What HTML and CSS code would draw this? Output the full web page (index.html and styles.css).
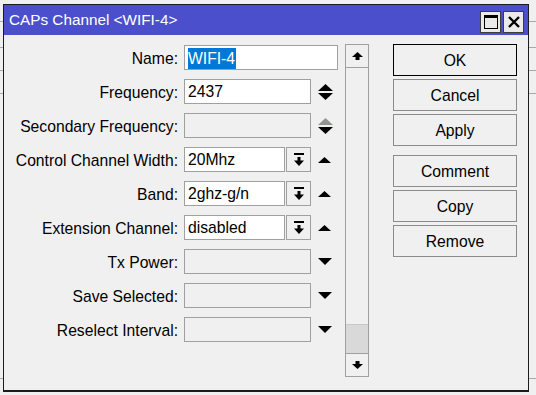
FILE: index.html
```html
<!DOCTYPE html>
<html lang="en">
<head>
  <meta charset="UTF-8">
  <title>CAPs Channel</title>
  <link rel="stylesheet" href="styles.css">
</head>
<body>
  <div class="desk">
    <div class="desk-row r1"></div>
    <div class="desk-row r2"></div>
    <div class="desk-row r3"></div>
    <div class="desk-row r4"></div>
    <div class="desk-row r5"></div>
  </div>

  <div class="window">
    <div class="titlebar">
      <span class="title">CAPs Channel &lt;WIFI-4&gt;</span>
      <div class="title-buttons">
        <button class="tbtn">
          <svg width="14" height="14" viewBox="0 0 14 14"><rect x="0.5" y="0.5" width="13" height="13" fill="none" stroke="#000"/><rect x="0" y="0" width="14" height="3" fill="#000"/></svg>
        </button>
        <button class="tbtn">
          <svg width="12" height="12" viewBox="0 0 12 12"><path d="M1 1 L11 11 M11 1 L1 11" stroke="#000" stroke-width="2.4"/></svg>
        </button>
      </div>
    </div>

    <div class="content">
      <div class="form">
        <label class="label">Name:</label>
        <div class="field wide"><span class="selected">WIFI-4</span></div>

        <label class="label">Frequency:</label>
        <div class="field">2437</div>
        <div class="side">
          <svg width="15" height="16" viewBox="0 0 15 16"><polygon points="0,7 7.5,0 15,7" fill="#000"/><polygon points="0,9 15,9 7.5,16" fill="#000"/></svg>
        </div>

        <label class="label">Secondary Frequency:</label>
        <div class="field disabled"></div>
        <div class="side">
          <svg width="15" height="16" viewBox="0 0 15 16"><polygon points="0,7 7.5,0 15,7" fill="#8e968e"/><polygon points="0,9 15,9 7.5,16" fill="#000"/></svg>
        </div>

        <label class="label">Control Channel Width:</label>
        <div class="combo">
          <div class="field">20Mhz</div>
          <div class="drop">
            <svg width="10" height="14" viewBox="0 0 10 14"><rect x="0" y="0" width="10" height="2" fill="#000"/><rect x="3.5" y="4" width="3" height="4" fill="#000"/><polygon points="0,7.5 10,7.5 5,13" fill="#000"/></svg>
          </div>
        </div>
        <div class="side">
          <svg width="13" height="6" viewBox="0 0 13 6"><polygon points="0,6 6.5,0 13,6" fill="#000"/></svg>
        </div>

        <label class="label">Band:</label>
        <div class="combo">
          <div class="field">2ghz-g/n</div>
          <div class="drop">
            <svg width="10" height="14" viewBox="0 0 10 14"><rect x="0" y="0" width="10" height="2" fill="#000"/><rect x="3.5" y="4" width="3" height="4" fill="#000"/><polygon points="0,7.5 10,7.5 5,13" fill="#000"/></svg>
          </div>
        </div>
        <div class="side">
          <svg width="13" height="6" viewBox="0 0 13 6"><polygon points="0,6 6.5,0 13,6" fill="#000"/></svg>
        </div>

        <label class="label">Extension Channel:</label>
        <div class="combo">
          <div class="field">disabled</div>
          <div class="drop">
            <svg width="10" height="14" viewBox="0 0 10 14"><rect x="0" y="0" width="10" height="2" fill="#000"/><rect x="3.5" y="4" width="3" height="4" fill="#000"/><polygon points="0,7.5 10,7.5 5,13" fill="#000"/></svg>
          </div>
        </div>
        <div class="side">
          <svg width="13" height="6" viewBox="0 0 13 6"><polygon points="0,6 6.5,0 13,6" fill="#000"/></svg>
        </div>

        <label class="label">Tx Power:</label>
        <div class="field disabled"></div>
        <div class="side">
          <svg width="14" height="7" viewBox="0 0 14 7"><polygon points="0,0 14,0 7,7" fill="#000"/></svg>
        </div>

        <label class="label">Save Selected:</label>
        <div class="field disabled"></div>
        <div class="side">
          <svg width="14" height="7" viewBox="0 0 14 7"><polygon points="0,0 14,0 7,7" fill="#000"/></svg>
        </div>

        <label class="label">Reselect Interval:</label>
        <div class="field disabled"></div>
        <div class="side">
          <svg width="14" height="7" viewBox="0 0 14 7"><polygon points="0,0 14,0 7,7" fill="#000"/></svg>
        </div>
      </div>

      <div class="scrollbar">
        <div class="sb-btn">
          <svg width="11" height="8" viewBox="0 0 11 8"><polygon points="0,5 5.5,0 11,5" fill="#000"/><rect x="3.5" y="5" width="4" height="3" fill="#000"/></svg>
        </div>
        <div class="sb-track"></div>
        <div class="sb-thumb"></div>
        <div class="sb-btn down">
          <svg width="11" height="8" viewBox="0 0 11 8"><rect x="3.5" y="0" width="4" height="3" fill="#000"/><polygon points="0,3 11,3 5.5,8" fill="#000"/></svg>
        </div>
      </div>

      <div class="actions">
        <button class="btn default">OK</button>
        <button class="btn">Cancel</button>
        <button class="btn">Apply</button>
        <button class="btn group">Comment</button>
        <button class="btn">Copy</button>
        <button class="btn">Remove</button>
      </div>
    </div>
  </div>
</body>
</html>
```

FILE: styles.css
```css
* {
  box-sizing: border-box;
  font-family: 'Liberation Sans', Arial, sans-serif;
}

body {
  margin: 0;
  background-color: #f0f0f0;
  width: 536px;
  height: 395px;
  overflow: hidden;
  position: relative;
}

.desk-row {
  border-bottom: 1px solid #a9a9a9;
}

.r1 { height: 22px; }
.r2 { height: 26px; }
.r3 { height: 23px; }
.r4 { height: 23px; }
.r5 { height: 285px; }

.window {
  position: absolute;
  left: 3px;
  top: 4px;
  width: 526px;
  height: 388px;
  background-color: #f0f0f0;
  border: 1px solid #1c1c1c;
  border-bottom-width: 2px;
}

.titlebar {
  height: 30px;
  background-color: #4b4fcb;
  display: flex;
  justify-content: space-between;
  align-items: flex-end;
  padding: 0 4px 2px 5px;
}

.title {
  color: white;
  font-size: 15.3px;
  align-self: center;
  margin-top: 2px;
}

.title-buttons {
  display: flex;
  gap: 2px;
}

.tbtn {
  width: 21px;
  height: 22px;
  padding: 0;
  background-color: #eaeaea;
  border: 1px solid #3c3c3c;
  display: flex;
  justify-content: center;
  align-items: center;
}

.content {
  display: flex;
  align-items: flex-start;
  padding-top: 9px;
}

.form {
  display: grid;
  grid-template-columns: 174px 127px 34px;
  grid-auto-rows: 25px;
  column-gap: 6px;
  row-gap: 9px;
  margin-top: 1px;
  width: 341px;
}

.label {
  font-size: 15.7px;
  color: #000;
  text-align: right;
  align-self: center;
  white-space: nowrap;
  padding-top: 2px;
}

.field {
  height: 25px;
  background-color: #fff;
  border: 1px solid #a0a0a0;
  font-size: 15.7px;
  line-height: 24px;
  padding-left: 3px;
  white-space: nowrap;
  overflow: hidden;
}

.field.wide {
  width: 154px;
  grid-column: 2 / 4;
}

.field.disabled {
  background-color: #f0f0f0;
}

.selected {
  background-color: #0078d7;
  color: #fff;
  display: inline-block;
  line-height: 21px;
  padding-right: 1px;
  vertical-align: middle;
}

.combo {
  display: flex;
  gap: 1px;
}

.combo .field {
  width: 101px;
}

.drop {
  width: 25px;
  height: 25px;
  border: 1px solid #a0a0a0;
  background-color: #f0f0f0;
  display: flex;
  justify-content: center;
  align-items: center;
}

.side {
  display: flex;
  align-items: center;
  padding-left: 1px;
}

.scrollbar {
  width: 24px;
  height: 333px;
  border: 1px solid #a0a0a0;
  display: flex;
  flex-direction: column;
}

.sb-btn {
  height: 23px;
  border-bottom: 1px solid #a0a0a0;
  display: flex;
  justify-content: center;
  align-items: center;
}

.sb-btn.down {
  border-bottom: none;
  border-top: 1px solid #a0a0a0;
}

.sb-track {
  flex: 1;
}

.sb-thumb {
  height: 29px;
  background-color: #d9d9d9;
  border-top: 1px solid #c8c8c8;
}

.actions {
  display: flex;
  flex-direction: column;
  gap: 3px;
  margin-left: 24px;
  width: 124px;
}

.btn {
  height: 32px;
  font-size: 15.7px;
  color: #000;
  background-color: #f0f0f0;
  border: 1px solid #8c8c8c;
  padding: 2px 0 0;
}

.btn.default {
  border: 1px solid #000;
  box-shadow: inset 0 0 0 1px #f0f0f0;
}

.btn.group {
  margin-top: 6px;
}
```
